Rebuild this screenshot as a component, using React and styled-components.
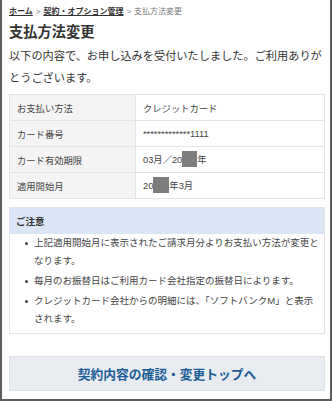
import React from "react";
import styled, { createGlobalStyle } from "styled-components";

const Global = createGlobalStyle`
  html, body { margin: 0; padding: 0; background: #fff; }
  body { font-family: "Liberation Sans", "Noto Sans CJK JP", sans-serif; color: #333; }
  * { box-sizing: border-box; }
`;

const Frame = styled.div`
  width: 332px;
  height: 401px;
  border: 2px solid #5c5c5c;
  border-top: none;
  padding: 0 5px 0 7px;
  overflow: hidden;
  display: flex;
  flex-direction: column;
`;

const Crumbs = styled.nav`
  margin-top: 6px;
  font-size: 8px;
  line-height: 12px;
  color: #777;
  display: flex;
  gap: 3px;
  white-space: nowrap;
`;

const CrumbLink = styled.a`
  color: #333;
  font-weight: bold;
  text-decoration: underline;
`;

const Title = styled.h1`
  margin: 4px 0 0;
  font-size: 14.25px;
  line-height: 20px;
  font-weight: bold;
  color: #333;
`;

const Lead = styled.p`
  margin: 3px 0 0;
  font-size: 11.2px;
  line-height: 22px;
  color: #333;
`;

const Table = styled.table`
  margin-top: 5px;
  width: 100%;
  border-collapse: collapse;
  font-size: 9.3px;
  color: #444;
`;

const Th = styled.th`
  width: 126px;
  height: 26px;
  padding: 0 7px;
  text-align: left;
  font-weight: normal;
  background: #f4f4f4;
  border: 1px solid #e4e4e4;
`;

const Td = styled.td`
  height: 26px;
  padding: 0 7px;
  background: #fff;
  border: 1px solid #e4e4e4;
  white-space: nowrap;
`;

const Mask = styled.span`
  display: inline-block;
  width: ${(p) => p.$w || 15}px;
  height: 16px;
  background: #7d7d7d;
  vertical-align: middle;
  margin-top: -2px;
`;

const Notice = styled.section`
  margin-top: 8px;
  border: 1px solid #e4e4e4;
`;

const NoticeHead = styled.div`
  height: 26px;
  padding: 0 6px;
  display: flex;
  align-items: center;
  background: #dae5f5;
  font-size: 9.5px;
  font-weight: bold;
  color: #333;
`;

const List = styled.ul`
  margin: 0;
  padding: 0 2px 5px 15px;
  list-style: none;
`;

const Item = styled.li`
  position: relative;
  padding-left: 9px;
  font-size: 9.5px;
  line-height: 18px;
  color: #444;
  & + & { margin-top: 2px; }
  &::before {
    content: "";
    position: absolute;
    left: 0;
    top: 8px;
    width: 3px;
    height: 3px;
    border-radius: 50%;
    background: #444;
  }
`;

const Button = styled.button`
  margin-top: 22px;
  height: 35px;
  width: 100%;
  border: 1px solid #dde1e5;
  background: #e8ecf0;
  color: #1d5d98;
  font-family: inherit;
  font-size: 12.75px;
  font-weight: bold;
  cursor: pointer;
`;

const rows = [
  ["お支払い方法", "クレジットカード"],
  ["カード番号", "*************1111"],
  ["カード有効期限", <>03月／20<Mask $w={15} />年</>],
  ["適用開始月", <>20<Mask $w={16} />年3月</>],
];

export default function App() {
  return (
    <>
      <Global />
      <Frame>
        <Crumbs>
          <CrumbLink>ホーム</CrumbLink>
          <span>&gt;</span>
          <CrumbLink>契約・オプション管理</CrumbLink>
          <span>&gt;</span>
          <span>支払方法変更</span>
        </Crumbs>
        <Title>支払方法変更</Title>
        <Lead>以下の内容で、お申し込みを受付いたしました。ご利用ありがとうございます。</Lead>
        <Table>
          <tbody>
            {rows.map(([k, v], i) => (
              <tr key={i}>
                <Th>{k}</Th>
                <Td>{v}</Td>
              </tr>
            ))}
          </tbody>
        </Table>
        <Notice>
          <NoticeHead>ご注意</NoticeHead>
          <List>
            <Item>上記適用開始月に表示されたご請求月分よりお支払い方法が変更となります。</Item>
            <Item>毎月のお振替日はご利用カード会社指定の振替日によります。</Item>
            <Item>クレジットカード会社からの明細には、「ソフトバンクM」と表示されます。</Item>
          </List>
        </Notice>
        <Button>契約内容の確認・変更トップへ</Button>
      </Frame>
    </>
  );
}
